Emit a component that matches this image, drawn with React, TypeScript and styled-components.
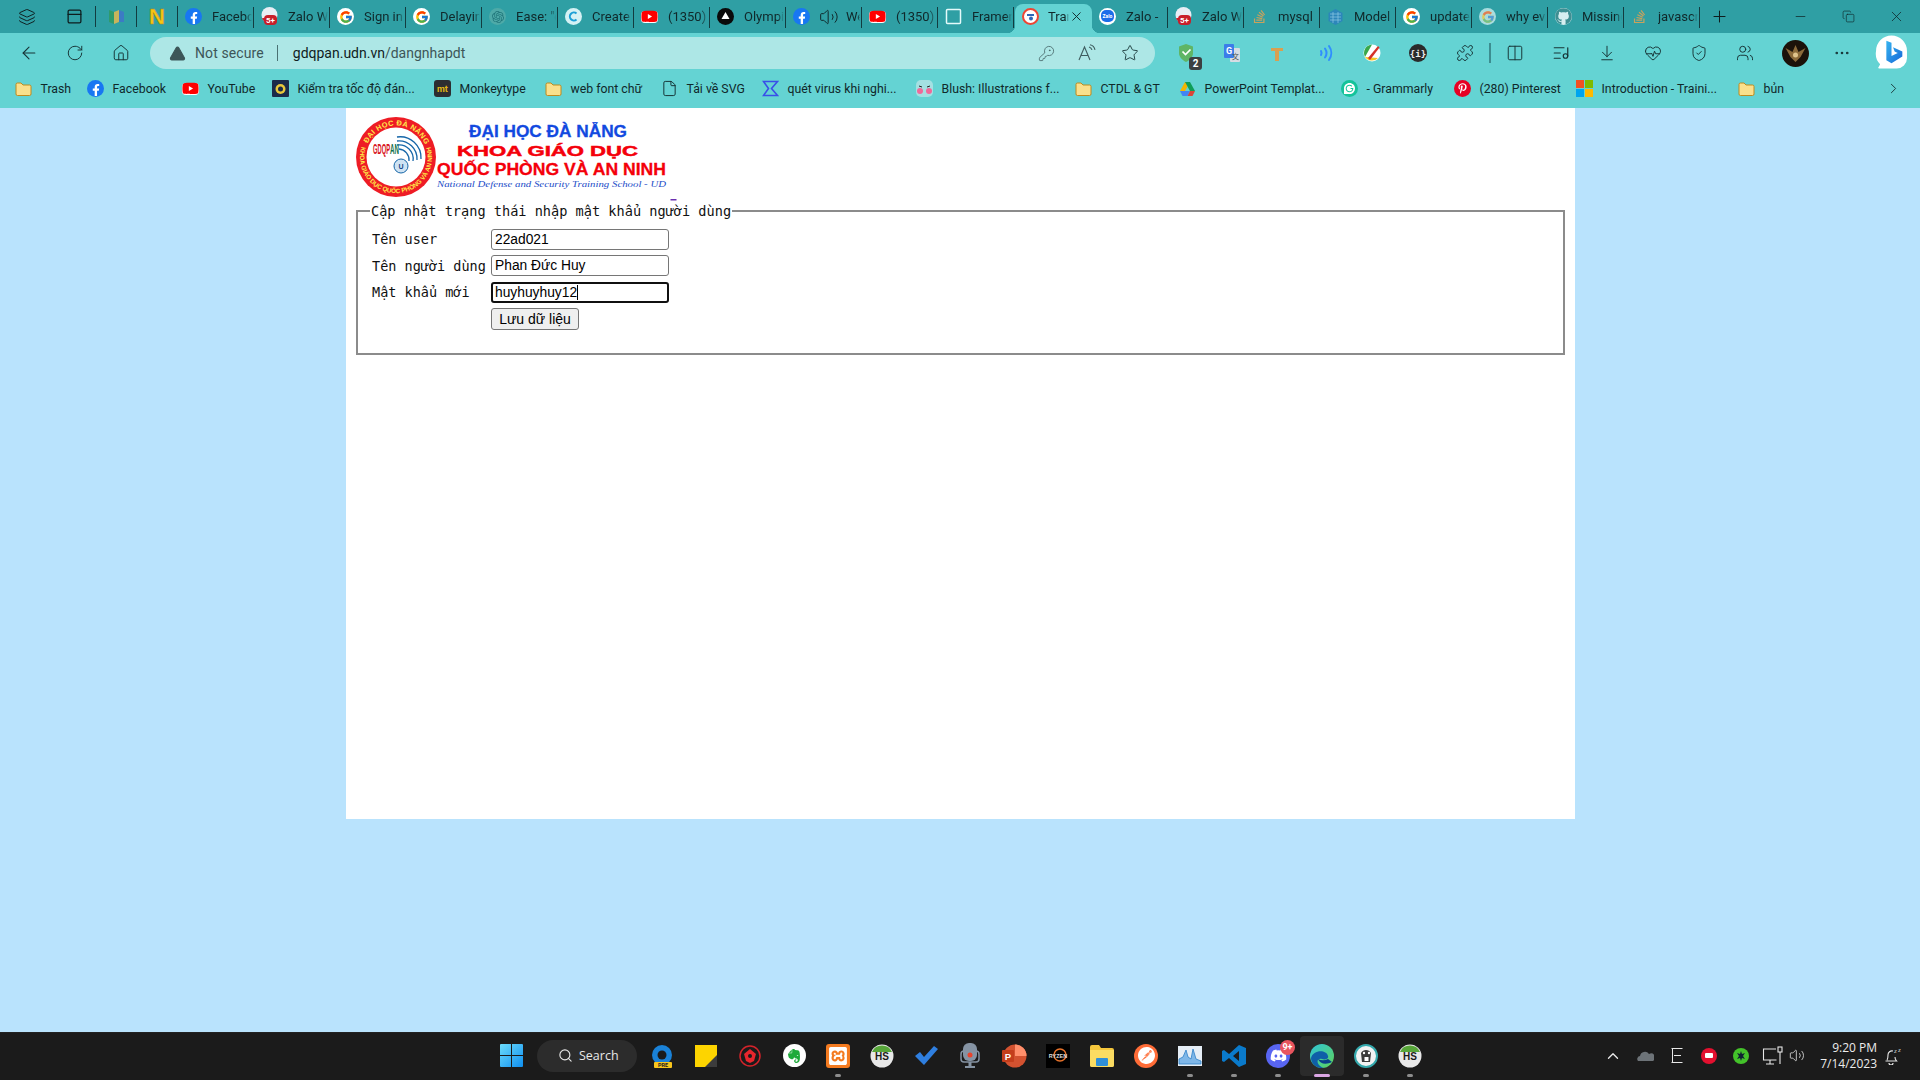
import React from "react";
import styled, { createGlobalStyle } from "styled-components";
import {
  ArrowLeft, RotateCw, House, TriangleAlert, KeyRound, Star, Puzzle, Columns2, ListMusic, ArrowDownToLine,
  HeartPulse, ShieldCheck, Ellipsis, Plus, Minus, X, Copy, ChevronRight, ChevronUp, Search, File, Volume2,
  Users, Layers, PanelTop,
} from "lucide-react";
import { FaFacebookF, FaGithub, FaStackOverflow, FaYoutube, FaPinterestP, FaDiscord, FaEvernote } from "react-icons/fa";
import { FcGoogle } from "react-icons/fc";
import { SiXampp, SiPostman, SiGrammarly, SiOpenai } from "react-icons/si";

const UI = `Roboto, "Noto Sans", sans-serif`;

const Global = createGlobalStyle`
  html, body { margin: 0; padding: 0; background: #b9e3fd; }
  * { box-sizing: border-box; }
`;

const Screen = styled.div`
  width: 1920px; height: 1080px; display: flex; flex-direction: column; overflow: hidden;
  font-family: ${UI}; background: #b9e3fd;
`;

/* ---------- tab strip ---------- */
const TabStrip = styled.div`
  height: 33px; flex: none; display: flex; align-items: center; background: #2f9fa4; color: #10282a;
`;
const StripIcon = styled.div<{ $w: number }>`
  width: ${p => p.$w}px; height: 33px; flex: none; display: flex; align-items: center; justify-content: center; color: #0e1d1e;
`;
const Sep = styled.div`
  width: 1px; height: 21px; flex: none; background: #123c40;
`;
const Tab = styled.div`
  width: 76px; height: 33px; flex: none; display: flex; align-items: center; padding: 0 2px 0 7px; position: relative;
  &::after { content: ""; position: absolute; right: 0; top: 7px; height: 21px; width: 1px; background: #123c40; }
`;
const ActiveTab = styled.div`
  width: 77px; height: 29px; margin: 4px 0 0 1px; flex: none; display: flex; align-items: center; padding: 0 8px 4px 7px; position: relative;
  background: #64d3d3; border-radius: 8px 8px 0 0; color: #10282a;
  &::before, &::after { content: ""; position: absolute; bottom: 0; width: 8px; height: 8px; }
  &::before { left: -8px; background: radial-gradient(circle at 0 0, transparent 8px, #64d3d3 8.500px); }
  &::after { right: -8px; background: radial-gradient(circle at 100% 0, transparent 8px, #64d3d3 8.500px); }
`;
const TabTitle = styled.span<{ $gap?: number }>`
  margin-left: ${p => p.$gap ?? 10}px; font-size: 13px; white-space: nowrap; overflow: hidden; flex: 1; min-width: 0;
  -webkit-mask-image: linear-gradient(90deg, #000 84%, transparent);
  mask-image: linear-gradient(90deg, #000 84%, transparent);
`;
const Fav = styled.span<{ $bg?: string; $c?: string; $s?: number }>`
  width: ${p => p.$s || 17}px; height: ${p => p.$s || 17}px; border-radius: 50%; flex: none; display: inline-flex; align-items: center; justify-content: center;
  background: ${p => p.$bg || "transparent"}; color: ${p => p.$c || "inherit"}; position: relative;
`;
const YtBox = styled.span`
  width: 17px; height: 12px; flex: none; display: inline-flex; align-items: center; justify-content: center; border-radius: 4px; background: #fff; color: #f00;
`;
const SpeakerSlot = styled.span`
  width: 20px; margin-left: 9px; flex: none; display: inline-flex; color: #10282a;
`;
const WindowButtons = styled.div`
  margin-left: auto; display: flex;
`;
const WinBtn = styled.div`
  width: 48px; height: 33px; display: flex; align-items: center; justify-content: center; color: #10282a;
`;

/* ---------- toolbar ---------- */
const Toolbar = styled.div`
  height: 40px; flex: none; display: flex; align-items: center; background: #64d3d3; padding-left: 6px; color: #173436;
`;
const ToolBtn = styled.div<{ $w?: number }>`
  width: ${p => p.$w || 46}px; height: 34px; flex: none; display: flex; align-items: center; justify-content: center; position: relative;
`;
const Address = styled.div`
  width: 1005px; height: 32px; margin: 0 8px 0 6px; flex: none; display: flex; align-items: center; border-radius: 16px;
  background: #ade7e6; padding-left: 19px; font-size: 14px;
`;
const NotSecure = styled.span`
  margin-left: 9px; color: #3d5658; font-size: 14px; letter-spacing: .1px;
`;
const AddrSep = styled.span`
  width: 1px; height: 16px; background: #4a7173; margin: 0 15px 0 13px;
`;
const Host = styled.span`
  color: #101d1e; font-size: 14px;
`;
const Path = styled.span`
  color: #3d5658;
`;
const AddrTools = styled.div`
  margin-left: auto; display: flex; align-items: center; padding-right: 4px; color: #3f5d5f;
`;
const AddrTool = styled.div`
  width: 42px; display: flex; justify-content: center;
`;
const ToolDivider = styled.div`
  width: 2px; height: 20px; margin: 0 1px 0 6px; background: #3c8d90; flex: none;
`;
const CountBadge = styled.span`
  position: absolute; right: 7px; bottom: 0; width: 13px; height: 13px; border-radius: 3px; background: #3b3f41; color: #fff;
  font-size: 10px; font-weight: 700; display: flex; align-items: center; justify-content: center;
`;

/* ---------- bookmarks ---------- */
const Bookmarks = styled.div`
  height: 35px; flex: none; display: flex; align-items: center; background: #64d3d3; padding: 0 0 4px 15px; position: relative; color: #10282a;
`;
const Bookmark = styled.div<{ $w: number }>`
  width: ${p => p.$w}px; flex: none; display: flex; align-items: center; gap: 8.500px; font-size: 12.300px; white-space: nowrap;
`;
const BmIcon = styled.span`
  width: 17px; height: 17px; flex: none; display: inline-flex; align-items: center; justify-content: center;
`;
const MoreBtn = styled.div`
  position: absolute; right: 18px; top: 7px; color: #173436;
`;

/* ---------- page ---------- */
const PageArea = styled.div`
  flex: 1; min-height: 0; display: flex; justify-content: center; align-items: flex-start; background: #b9e3fd;
`;
const Sheet = styled.main`
  width: 1229px; height: 711px; margin-left: 1px; background: #fff; padding: 7px 9px 0 10px;
`;
const LogoBox = styled.div`
  height: 88px; margin-left: -1px; line-height: 0;
`;
const Fieldset = styled.fieldset`
  width: 1209px; height: 152px; margin: 0; padding: 0 14px; border: 2px solid #8b8b8b; font-family: "DejaVu Sans Mono", monospace; font-size: 13.500px; color: #111;
`;
const Legend = styled.legend`
  padding: 0 1px; margin-left: -2px; line-height: 16px; height: 16px; font-size: 13.600px;
`;
const FormGrid = styled.div`
  display: grid; grid-template-columns: 119px 178px; grid-auto-rows: 21px; row-gap: 5.500px; align-items: center; margin-top: 9.500px;
`;
const Label = styled.label`
  white-space: nowrap; margin-right: -4px;
`;
const Field = styled.div<{ $focus?: boolean }>`
  height: 21px; display: flex; align-items: center; padding-left: ${p => (p.$focus ? 2 : 3)}px; border-radius: 3px; background: #fff;
  border: ${p => (p.$focus ? "2px solid #101010" : "1px solid #767676")};
  font-family: "Liberation Sans", Arial, sans-serif; font-size: 13.800px; color: #000; white-space: nowrap;
`;
const Caret = styled.span`
  display: inline-block; width: 1px; height: 15px; background: #000;
`;
const SaveButton = styled.button`
  grid-column: 2; justify-self: start; width: 88px; height: 22px; padding: 0; border: 1px solid #767676; border-radius: 3px; background: #efefef;
  font-family: "Liberation Sans", Arial, sans-serif; font-size: 14px; color: #000;
`;

/* ---------- taskbar ---------- */
const Taskbar = styled.footer`
  height: 48px; flex: none; display: flex; align-items: center; background: #1b1b1b; padding: 0 11px 2px 487px; color: #fff; border-top: 1px solid #222;
`;
const Start = styled.div`
  width: 48px; display: flex; justify-content: center; flex: none;
`;
const SearchPill = styled.div`
  width: 100px; height: 32px; margin-left: 2px; margin-right: 3px; flex: none; border-radius: 16px; background: #2c2c2c; display: flex; align-items: center; gap: 6px; padding-left: 21px; font-size: 12.500px; color: #e8e8e8;
  font-family: "Open Sans", sans-serif;
`;
const TaskBtn = styled.div<{ $active?: boolean }>`
  width: 44px; height: 40px; flex: none; display: flex; align-items: center; justify-content: center; position: relative; border-radius: 4px;
  background: ${p => (p.$active ? "#2b2b2b" : "transparent")};
`;
const RunDot = styled.span<{ $active?: boolean }>`
  position: absolute; bottom: -1px; left: 50%; transform: translateX(-50%); height: 3px; border-radius: 2px;
  width: ${p => (p.$active ? 16 : 6)}px; background: ${p => (p.$active ? "#dba6e4" : "#8d8d8d")};
`;
const Tray = styled.div`
  margin-left: auto; display: flex; align-items: center; color: #e8e8e8;
`;
const TrayIcon = styled.div<{ $w?: number }>`
  width: ${p => p.$w || 32}px; display: flex; justify-content: center; flex: none;
`;
const Clock = styled.div`
  width: 72px; text-align: right; font-family: "Open Sans", sans-serif; font-size: 12px; line-height: 16px; color: #ececec;
`;
const NineChip = styled.span`
  position: absolute; top: -4px; right: -5px; width: 15px; height: 15px; border-radius: 50%; background: #e8545e; color: #fff;
  font-size: 9px; font-weight: 700; display: flex; align-items: center; justify-content: center;
`;

/* ---------- favicons and drawings ---------- */
const Facebook = () => <Fav $bg="#1877f2" $c="#fff"><FaFacebookF size={12} style={{ marginTop: 3 }} /></Fav>;
const Google = () => <Fav $bg="#fff"><FcGoogle size={14} /></Fav>;
const GoogleDim = () => <Fav $bg="#a9dcde"><FcGoogle size={14} style={{ opacity: .6 }} /></Fav>;
const Youtube = () => <YtBox><FaYoutube size={19} /></YtBox>;
const ZaloWeb = () => (
  <svg width="17" height="19" viewBox="0 0 17 19"><circle cx="8.500" cy="8" r="8" fill="#e8eef5" /><path d="M1 11h15a8 8 0 0 1-15 0z" fill="#d11f2b" /><rect x="3" y="8" width="13" height="10" rx="4" fill="#c81e2a" /><text x="9.500" y="16" fontSize="8" fontWeight="700" fill="#fff" textAnchor="middle" fontFamily="Roboto">5+</text></svg>
);
const ZaloPlain = () => (
  <svg width="17" height="17" viewBox="0 0 17 17"><circle cx="8.500" cy="8.500" r="8.500" fill="#fff" /><rect x="2" y="2" width="13" height="12" rx="5" fill="#1b6dea" /><text x="8.500" y="10" fontSize="5" fontWeight="700" fill="#fff" textAnchor="middle" fontFamily="Roboto">Zalo</text></svg>
);
const Folder = () => (
  <svg width="17" height="16" viewBox="0 0 17 16"><path d="M1 3.500A1.500 1.500 0 0 1 2.500 2H6l2 2h6.500A1.500 1.500 0 0 1 16 5.500V13a1.500 1.500 0 0 1-1.500 1.500h-12A1.500 1.500 0 0 1 1 13z" fill="#fbe08c" stroke="#c08a1c" /></svg>
);
const TeacherLogo = () => (
  <svg width="17" height="17" viewBox="0 0 17 17"><circle cx="8.500" cy="8.500" r="7.500" fill="#fff" stroke="#e43" strokeWidth="2" /><path d="M5 6h7v2H5z" fill="#2d66b8" /><circle cx="9" cy="10.500" r="2" fill="#2d66b8" /></svg>
);
const Frame = () => <svg width="17" height="17" viewBox="0 0 17 17"><rect x="1.500" y="1.500" width="14" height="14" rx="1" fill="none" stroke="#e4fafa" strokeWidth="1.500" /></svg>;
const Olympia = () => <svg width="17" height="17" viewBox="0 0 17 17"><circle cx="8.500" cy="8.500" r="8.500" fill="#0a0a0a" /><path d="M8.500 4l4 7h-8z" fill="#fff" /></svg>;
const GChart = () => (
  <svg width="17" height="17" viewBox="0 0 17 17"><path d="M1 2l5 2v12l-5-2z" fill="#2f9a6c" /><path d="M6 4l5-2v12l-5 2z" fill="#c9b45c" /><path d="M11 2l5 2v10l-5 0z" fill="#3c7bc4" /></svg>
);
const NMark = styled.span`
  font-family: "Liberation Sans", sans-serif; font-weight: 700; font-size: 22px; color: #f7c613; line-height: 1; -webkit-text-stroke: .5px #b5860e;
`;
const ChatGpt = () => <Fav $bg="#4eaaa8" $c="#20757a"><SiOpenai size={12} /></Fav>;
const CreateIc = () => <svg width="17" height="17" viewBox="0 0 17 17"><circle cx="8.500" cy="8.500" r="8.500" fill="#d5f1f4" /><path d="M11.500 5.500a4 4 0 1 0 0 6" fill="none" stroke="#1c9fd6" strokeWidth="2" /></svg>;
const ModelIc = () => <svg width="17" height="18" viewBox="0 0 17 18"><path d="M8.500 1l7 4v8l-7 4-7-4V5z" fill="#2c86ba" /><path d="M3 6h11M3 9h11M3 12h11M6 4v11M11 4v11" stroke="#8cc8e4" strokeWidth=".7" /></svg>;
const Adguard = () => <svg width="18" height="20" viewBox="0 0 18 20"><path d="M9 1l7 2.500V10c0 4-3 7-7 9-4-2-7-5-7-9V3.500z" fill="#5fb565" /><path d="M5.500 8.500l3 3 5-5" fill="none" stroke="#fff" strokeWidth="1.700" /></svg>;
const Translate = () => <svg width="18" height="20" viewBox="0 0 18 20"><rect x="7" y="5" width="10" height="14" rx="1" fill="#d7dde4" /><rect x="1" y="1" width="10" height="14" rx="1" fill="#3b7de9" /><text x="6" y="11" fontSize="9" fontWeight="700" fill="#fff" textAnchor="middle" fontFamily="Roboto">G</text><text x="12.500" y="16" fontSize="7" fill="#555" textAnchor="middle" fontFamily="Noto Sans CJK JP">文</text></svg>;
const OrangeExt = () => <svg width="14" height="17" viewBox="0 0 14 17"><path d="M1 3h12v3H9v10H5V6H1z" fill="#d8a050" /></svg>;
const Waves = () => <svg width="16" height="18" viewBox="0 0 16 18" fill="none" stroke="#2f8dff" strokeWidth="2" strokeLinecap="round"><path d="M3 7a4 4 0 0 1 0 4M7 4.500a8 8 0 0 1 0 9M11 2a12 12 0 0 1 0 14" /></svg>;
const ColorExt = () => <svg width="18" height="18" viewBox="0 0 18 18"><circle cx="9" cy="9" r="8.500" fill="#fff" /><path d="M9 .5A8.500 8.500 0 0 0 2 13z" fill="#38a84b" /><path d="M2 13a8.500 8.500 0 0 0 13 1z" fill="#f3c623" /><path d="M5 14L15 2l1.500 1.500L7 16z" fill="#d63228" /></svg>;
const DarkExt = () => <svg width="18" height="18" viewBox="0 0 18 18"><circle cx="9" cy="9" r="9" fill="#2b2b2b" /><text x="9" y="13" fontSize="9" fontWeight="700" fill="#eee" textAnchor="middle" fontFamily="DejaVu Sans Mono">{"{i}"}</text></svg>;
const Avatar = () => <svg width="27" height="27" viewBox="0 0 27 27"><circle cx="13.500" cy="13.500" r="13.500" fill="#1b120a" /><path d="M13.500 5l3 7 7-4-5 9-5 5-5-5-5-9 7 4z" fill="#8b6a3a" /><circle cx="13.500" cy="15" r="2.500" fill="#e0c48c" /></svg>;
const ReadAloud = () => (
  <svg width="20" height="18" viewBox="0 0 20 18" fill="none" stroke="#3f5d5f" strokeWidth="1.100"><path d="M1 16L6.500 3 12 16M3 11.500h7" /><path d="M11 3a4 4 0 0 1 3 3M12 .8a6.500 6.500 0 0 1 5 5" /></svg>
);
const Bing = () => (
  <svg width="33" height="38" viewBox="0 0 32 36">
    <defs><linearGradient id="bg" x1="0" y1="0" x2="1" y2="1"><stop offset="0" stopColor="#36b4f0" /><stop offset="1" stopColor="#1668d8" /></linearGradient></defs>
    <path d="M16 1a15 15 0 0 1 15 15v7a10 10 0 0 1-10 10H4c-1 0-1-1-.5-1.500L5 29A15 15 0 0 1 1 16 15 15 0 0 1 16 1z" fill="#fff" />
    <path d="M11 6l5 2v13l6-3-3-1.500-1.500-4 9 4v5L16 28l-5-3z" fill="url(#bg)" />
  </svg>
);
const NetMonitor = () => (
  <svg width="22" height="20" viewBox="0 0 22 20" fill="none" stroke="#e8e8e8" strokeWidth="1.100"><path d="M14 3H1.500v11h13M8 14v4M4 18h8" /><rect x="16" y="1" width="4" height="5" /><path d="M18 6v12" /></svg>
);
const BellZz = () => (
  <svg width="18" height="18" viewBox="0 0 18 18" fill="none" stroke="#e8e8e8" strokeWidth="1.100"><path d="M3 13c1-1 1-3 1-5a4 4 0 0 1 5-4M1.500 14h11c-1-1-1.500-2-1.500-4M5 16a2 2 0 0 0 4 0" /><text x="10" y="6" fontSize="6" fill="#e8e8e8" stroke="none" fontFamily="Open Sans">z</text><text x="14" y="4.500" fontSize="6" fill="#e8e8e8" stroke="none" fontFamily="Open Sans">z</text></svg>
);
const Logo = () => (
  <svg width="322" height="86" viewBox="0 0 322 86">
    <defs>
      <path id="ringTop" d="M11.400 31.200A31.500 31.500 0 0 1 70.600 31.200" />
      <path id="ringBot" d="M8.400 26.800A36 36 0 1 0 73.600 26.800" />
    </defs>
    <circle cx="41" cy="42" r="40" fill="#ee1c25" />
    <circle cx="41" cy="42" r="29.500" fill="#fff" />
    <text fontSize="7.400" fontWeight="700" fill="#ffe94a" fontFamily="Liberation Sans"><textPath href="#ringTop" startOffset="3" textLength="72">ĐẠI HỌC ĐÀ NẴNG</textPath></text>
    <text fontSize="6.400" fontWeight="700" fill="#ffe94a" fontFamily="Liberation Sans"><textPath href="#ringBot" startOffset="5" textLength="134">KHOA GIÁO DỤC QUỐC PHÒNG VÀ AN NINH</textPath></text>
    <g fill="none" stroke="#1666a8" strokeWidth="1.300">
      <path d="M42 22a21 21 0 0 1 24 22" /><path d="M42 26a18 18 0 0 1 20 19" /><path d="M42 30a14 14 0 0 1 16 16" /><path d="M44 34a11 11 0 0 1 10 12" />
    </g>
    <text x="18" y="39" fontSize="15" fontWeight="700" fill="#d8121a" fontFamily="Liberation Sans" textLength="17" lengthAdjust="spacingAndGlyphs">GDQP</text>
    <text x="35" y="39" fontSize="15" fontWeight="700" fill="#12704a" fontFamily="Liberation Sans" textLength="9" lengthAdjust="spacingAndGlyphs">AN</text>
    <circle cx="46" cy="51" r="7" fill="#cfe3f3" stroke="#1666a8" /><text x="46" y="54" fontSize="7" fontWeight="700" fill="#16468a" textAnchor="middle" fontFamily="Liberation Sans">U</text>
    <text x="193" y="21.500" fontSize="17" fontWeight="700" fill="#1249e0" stroke="#1249e0" strokeWidth=".3" textAnchor="middle" fontFamily="Liberation Sans" textLength="158" lengthAdjust="spacingAndGlyphs">ĐẠI HỌC ĐÀ NẴNG</text>
    <text x="192.500" y="41" fontSize="15" fontWeight="700" fill="#f4000a" stroke="#f4000a" strokeWidth=".5" textAnchor="middle" fontFamily="Liberation Sans" textLength="181" lengthAdjust="spacingAndGlyphs">KHOA  GIÁO  DỤC</text>
    <text x="196.500" y="59.500" fontSize="17" fontWeight="700" fill="#f4000a" stroke="#f4000a" strokeWidth=".3" textAnchor="middle" fontFamily="Liberation Sans" textLength="229" lengthAdjust="spacingAndGlyphs">QUỐC PHÒNG VÀ AN NINH</text>
    <text x="196.500" y="72" fontSize="9" fontStyle="italic" fill="#1b4cc8" textAnchor="middle" fontFamily="Liberation Serif" textLength="229" lengthAdjust="spacingAndGlyphs">National Defense and Security Training School - UD</text>
    <rect x="315.500" y="84" width="6" height="1.500" fill="#6a2fb0" />
  </svg>
);

const tabs: [React.ReactNode, string][] = [
  [<Facebook />, "Facebook"],
  [<ZaloWeb />, "Zalo Web"],
  [<Google />, "Sign in"],
  [<Google />, "Delaying"],
  [<ChatGpt />, "Ease: \"could"],
  [<CreateIc />, "Create"],
  [<Youtube />, "(1350)"],
  [<Olympia />, "Olympia"],
];
const tabs2: [React.ReactNode, string][] = [
  [<Youtube />, "(1350)"],
  [<Frame />, "Framer"],
];
const tabs3: [React.ReactNode, string][] = [
  [<ZaloPlain />, "Zalo -"],
  [<ZaloWeb />, "Zalo Web"],
  [<Fav $c="#c9a25c"><FaStackOverflow size={15} /></Fav>, "mysql"],
  [<ModelIc />, "Model"],
  [<Google />, "update"],
  [<GoogleDim />, "why every"],
  [<Fav $bg="#d6eef0" $c="#3e8f93"><FaGithub size={17} /></Fav>, "Missing"],
  [<Fav $c="#c9a25c"><FaStackOverflow size={15} /></Fav>, "javascript"],
];

const bookmarks: [React.ReactNode, string, number][] = [
  [<Folder />, "Trash", 72],
  [<Facebook />, "Facebook", 95],
  [<Youtube />, "YouTube", 90],
  [<svg width="17" height="17" viewBox="0 0 17 17"><rect width="17" height="17" rx="1" fill="#1b2b4a" /><circle cx="8.500" cy="9" r="5" fill="#e8c83c" /><circle cx="8.500" cy="9" r="2.500" fill="#1b2b4a" /></svg>, "Kiểm tra tốc độ đán...", 162],
  [<svg width="17" height="17" viewBox="0 0 17 17"><rect width="17" height="17" rx="3" fill="#2c2e31" /><text x="8.500" y="12" fontSize="9" fontWeight="700" fill="#e2b714" textAnchor="middle" fontFamily="Roboto">mt</text></svg>, "Monkeytype", 111],
  [<Folder />, "web font chữ", 116],
  [<File size={17} strokeWidth={1.300} />, "Tải về SVG", 101],
  [<svg width="17" height="17" viewBox="0 0 17 17"><path d="M1.500 1.500h14l-6 7 6 7h-14l5-7z" fill="none" stroke="#3a4fe8" strokeWidth="1.600" /></svg>, "quét virus khi nghi...", 154],
  [<svg width="17" height="17" viewBox="0 0 17 17"><rect width="17" height="17" rx="5" fill="#a4e0e2" /><circle cx="4" cy="11" r="3" fill="#f06a9a" /><circle cx="13" cy="11" r="3" fill="#f06a9a" /><path d="M3 6l3 1M14 6l-3 1" stroke="#222" /></svg>, "Blush: Illustrations f...", 159],
  [<Folder />, "CTDL & GT", 104],
  [<svg width="17" height="16" viewBox="0 0 17 16"><path d="M6 1h5l-5 9H1z" fill="#f4b400" /><path d="M11 1l5 9h-5L6 1z" fill="#0f9d58" /><path d="M1 10h10l-2.500 5H3.500z" fill="#4285f4" /><path d="M11 10h5l-2.500 5h-5z" fill="#db4437" /></svg>, "PowerPoint Templat...", 162],
  [<Fav $bg="#15c39a" $c="#fff"><SiGrammarly size={11} /></Fav>, "- Grammarly", 113],
  [<Fav $bg="#e60023" $c="#fff"><FaPinterestP size={11} /></Fav>, "(280) Pinterest", 122],
  [<svg width="17" height="17" viewBox="0 0 17 17"><rect width="8" height="8" fill="#f25022" /><rect x="9" width="8" height="8" fill="#7fba00" /><rect y="9" width="8" height="8" fill="#00a4ef" /><rect x="9" y="9" width="8" height="8" fill="#ffb900" /></svg>, "Introduction - Traini...", 162],
  [<Folder />, "bủn", 60],
];

const HsIcon = () => (
  <svg width="24" height="24" viewBox="0 0 24 24"><circle cx="12" cy="12" r="11.500" fill="#e8e8e8" /><path d="M2 8a11 11 0 0 1 20 0z" fill="#57a639" /><text x="12" y="16" fontSize="10" fontWeight="700" fill="#1a1a1a" textAnchor="middle" fontFamily="Liberation Sans">HS</text></svg>
);

const taskIcons: [React.ReactNode, boolean?][] = [
  [<svg width="24" height="24" viewBox="0 0 24 24"><circle cx="12" cy="11" r="10" fill="#1a82d8" /><circle cx="12" cy="11" r="4.500" fill="#1b1b1b" /><rect x="4" y="18" width="18" height="6" rx="1" fill="#f8c51c" /><text x="13" y="23" fontSize="5.500" fontWeight="700" fill="#222" textAnchor="middle" fontFamily="Roboto">PRE</text></svg>],
  [<svg width="22" height="22" viewBox="0 0 22 22"><path d="M0 0h22v14l-8 8H0z" fill="#fdd400" /><path d="M22 10v12H10z" fill="#3c3c3c" /></svg>],
  [<svg width="22" height="22" viewBox="0 0 22 22"><circle cx="11" cy="11" r="10" fill="none" stroke="#d4232a" strokeWidth="1.500" /><path d="M11 4l6 5-2 7-4 2-4-2-2-7z" fill="#e8262d" /><circle cx="11" cy="11" r="2" fill="#1b1b1b" /></svg>],
  [<Fav $bg="#fff" $c="#1faa3a" $s={23}><FaEvernote size={16} /></Fav>],
  [<Fav $bg="#f47b20" $c="#fff" $s={24} style={{ borderRadius: 3 }}><SiXampp size={18} /></Fav>, true],
  [<HsIcon />],
  [<svg width="24" height="22" viewBox="0 0 24 22"><path d="M1 11l5-4 4 5L20 1l4 3L10 20z" fill="#2f7fe0" /></svg>],
  [<svg width="20" height="26" viewBox="0 0 20 26"><rect x="3" y="0" width="14" height="18" rx="6" fill="#8593a3" /><circle cx="10" cy="12" r="2.500" fill="#e8442c" /><rect x="1" y="8" width="18" height="11" rx="3" fill="none" stroke="#8593a3" strokeWidth="1.500" /><rect x="8.500" y="19" width="3" height="4" fill="#8593a3" /><rect x="5" y="23" width="10" height="2" fill="#8593a3" /></svg>],
  [<svg width="25" height="24" viewBox="0 0 25 24"><circle cx="13" cy="12" r="11.500" fill="#d35230" /><path d="M13 .5a11.500 11.500 0 0 1 11.500 11.500H13z" fill="#ff8f6b" /><rect x="0" y="6" width="12" height="12" rx="1" fill="#c43e1c" /><text x="6" y="15.500" fontSize="9.500" fontWeight="700" fill="#fff" textAnchor="middle" fontFamily="Liberation Sans">P</text></svg>],
  [<svg width="24" height="24" viewBox="0 0 24 24"><rect width="24" height="24" fill="#000" /><circle cx="14" cy="11" r="6" fill="none" stroke="#e8722a" strokeWidth="1.500" /><text x="12" y="14" fontSize="5.500" fontWeight="700" fill="#ddd" textAnchor="middle" fontFamily="Liberation Sans">RYZEN</text></svg>],
  [<svg width="24" height="22" viewBox="0 0 24 22"><path d="M0 2a2 2 0 0 1 2-2h7l2 3h11a2 2 0 0 1 2 2v15a2 2 0 0 1-2 2H2a2 2 0 0 1-2-2z" fill="#f5c73c" /><path d="M0 5h24v15a2 2 0 0 1-2 2H2a2 2 0 0 1-2-2z" fill="#fbdc62" /><rect x="6" y="13" width="12" height="8" rx="1" fill="#2f8fd8" /></svg>],
  [<Fav $bg="#ff6c37" $c="#fff" $s={24}><SiPostman size={17} /></Fav>],
  [<svg width="24" height="20" viewBox="0 0 24 20"><rect width="24" height="20" fill="#e6eef6" /><path d="M1 18V13l4-2 3-7 2 7 3 2 2-10 3 10 5 2v3z" fill="#7fb7e8" stroke="#2f80c8" strokeWidth=".8" /></svg>, true],
  [<svg width="24" height="24" viewBox="0 0 24 24"><path d="M17 1l7 3v16l-7 3-10-9-5 4-2-1V7l2-1 5 4zM17 7l-6 5 6 5z" fill="#0a7acb" fillRule="evenodd" /></svg>, true],
  [<Fav $s={24} $bg="#5865f2" $c="#fff"><FaDiscord size={17} /><NineChip>9+</NineChip></Fav>, true],
];

const Edge = () => (
  <svg width="24" height="24" viewBox="0 0 24 24">
    <defs><linearGradient id="eg" x1="0" y1="0" x2="1" y2="1"><stop offset="0" stopColor="#2fc4d8" /><stop offset="1" stopColor="#5fd35a" /></linearGradient></defs>
    <circle cx="12" cy="12" r="12" fill="url(#eg)" /><path d="M1 14C3 6 16 5 18 12c1 3-3 4-6 3-4-1-6 2-3 6 1 1 4 3 5 3C7 25 1 20 1 14z" fill="#0f5fa8" /><path d="M18 15a7 4 0 0 1-10 0c2 5 8 6 14 3z" fill="#0a3f8a" />
  </svg>
);
const Beaver = () => <svg width="24" height="24" viewBox="0 0 24 24"><circle cx="12" cy="12" r="11" fill="#f2f2f2" stroke="#34a8ac" strokeWidth="2" /><path d="M7 9c2-4 8-4 10 0l-1 9H8z" fill="#3a3a3a" /><circle cx="10" cy="9" r="1.200" fill="#fff" /><circle cx="15" cy="9" r="1.200" fill="#fff" /><rect x="10.500" y="13" width="4" height="4" fill="#fff" /></svg>;

export default function App() {
  return (
    <Screen>
      <Global />
      <TabStrip>
        <StripIcon $w={54}><Layers size={18} strokeWidth={1.300} /></StripIcon>
        <StripIcon $w={41}><PanelTop size={17} strokeWidth={1.800} /></StripIcon>
        <Sep />
        <StripIcon $w={40}><GChart /></StripIcon>
        <Sep />
        <StripIcon $w={40}><NMark>N</NMark></StripIcon>
        <Sep />
        {tabs.map(([ic, t], i) => (
          <Tab key={i}>{ic}<TabTitle>{t}</TabTitle></Tab>
        ))}
        <Tab><Facebook /><SpeakerSlot><Volume2 size={20} strokeWidth={1.200} /></SpeakerSlot><TabTitle $gap={7}>Web</TabTitle></Tab>
        {tabs2.map(([ic, t], i) => (
          <Tab key={i}>{ic}<TabTitle>{t}</TabTitle></Tab>
        ))}
        <ActiveTab>
          <TeacherLogo /><TabTitle $gap={9}>Trang</TabTitle><X size={15} strokeWidth={1.500} />
        </ActiveTab>
        {tabs3.map(([ic, t], i) => (
          <Tab key={i}>{ic}<TabTitle>{t}</TabTitle></Tab>
        ))}
        <StripIcon $w={38}><Plus size={19} strokeWidth={1.300} /></StripIcon>
        <WindowButtons>
          <WinBtn><Minus size={15} strokeWidth={1.200} /></WinBtn>
          <WinBtn><Copy size={13} strokeWidth={1.200} /></WinBtn>
          <WinBtn><X size={17} strokeWidth={1.100} /></WinBtn>
        </WindowButtons>
      </TabStrip>

      <Toolbar>
        <ToolBtn><ArrowLeft size={20} strokeWidth={1.300} /></ToolBtn>
        <ToolBtn><RotateCw size={18} strokeWidth={1.300} /></ToolBtn>
        <ToolBtn><House size={18} strokeWidth={1.300} /></ToolBtn>
        <Address>
          <TriangleAlert size={17} fill="#3d5658" color="#3d5658" strokeWidth={1.500} />
          <NotSecure>Not secure</NotSecure>
          <AddrSep />
          <Host>gdqpan.udn.vn<Path>/dangnhapdt</Path></Host>
          <AddrTools>
            <AddrTool><KeyRound size={17} strokeWidth={1.100} /></AddrTool>
            <AddrTool><ReadAloud /></AddrTool>
            <AddrTool><Star size={18} strokeWidth={1.200} color="#173436" /></AddrTool>
          </AddrTools>
        </Address>
        <ToolBtn><Adguard /><CountBadge>2</CountBadge></ToolBtn>
        <ToolBtn><Translate /></ToolBtn>
        <ToolBtn $w={43}><OrangeExt /></ToolBtn>
        <ToolBtn $w={56}><Waves /></ToolBtn>
        <ToolBtn $w={36}><ColorExt /></ToolBtn>
        <ToolBtn $w={56}><DarkExt /></ToolBtn>
        <ToolBtn $w={37}><Puzzle size={18} strokeWidth={1.300} /></ToolBtn>
        <ToolDivider />
        <ToolBtn><Columns2 size={18} strokeWidth={1.300} /></ToolBtn>
        <ToolBtn><ListMusic size={18} strokeWidth={1.600} /></ToolBtn>
        <ToolBtn><ArrowDownToLine size={18} strokeWidth={1.300} /></ToolBtn>
        <ToolBtn><HeartPulse size={18} strokeWidth={1.300} /></ToolBtn>
        <ToolBtn><ShieldCheck size={18} strokeWidth={1.300} /></ToolBtn>
        <ToolBtn><Users size={18} strokeWidth={1.300} /></ToolBtn>
        <ToolBtn $w={54}><Avatar /></ToolBtn>
        <ToolBtn $w={40}><Ellipsis size={18} strokeWidth={1.500} /></ToolBtn>
        <ToolBtn $w={58}><Bing /></ToolBtn>
      </Toolbar>

      <Bookmarks>
        {bookmarks.map(([ic, t, w], i) => (
          <Bookmark key={i} $w={w}><BmIcon>{ic}</BmIcon>{t}</Bookmark>
        ))}
        <MoreBtn><ChevronRight size={17} strokeWidth={1.300} /></MoreBtn>
      </Bookmarks>

      <PageArea>
        <Sheet>
          <LogoBox><Logo /></LogoBox>
          <Fieldset>
            <Legend>Cập nhật trạng thái nhập mật khẩu người dùng</Legend>
            <FormGrid>
              <Label>Tên user</Label>
              <Field>22ad021</Field>
              <Label>Tên người dùng</Label>
              <Field>Phan Đức Huy</Field>
              <Label>Mật khẩu mới</Label>
              <Field $focus>huyhuyhuy12<Caret /></Field>
              <SaveButton type="button">Lưu dữ liệu</SaveButton>
            </FormGrid>
          </Fieldset>
        </Sheet>
      </PageArea>

      <Taskbar>
        <Start>
          <svg width="23" height="23" viewBox="0 0 23 23">
            <defs><linearGradient id="wg" x1="0" y1="0" x2="1" y2="1"><stop offset="0" stopColor="#6cdcfb" /><stop offset="1" stopColor="#0f8ff0" /></linearGradient></defs>
            <path d="M0 1a1 1 0 0 1 1-1h10v11H0zM12 0h10a1 1 0 0 1 1 1v10H12zM0 12h11v11H1a1 1 0 0 1-1-1zM12 12h11v10a1 1 0 0 1-1 1H12z" fill="url(#wg)" />
          </svg>
        </Start>
        <SearchPill><Search size={15} strokeWidth={1.800} />Search</SearchPill>
        {taskIcons.map(([ic, run], i) => (
          <TaskBtn key={i}>{ic}{run && <RunDot />}</TaskBtn>
        ))}
        <TaskBtn $active><Edge /><RunDot $active /></TaskBtn>
        <TaskBtn><Beaver /><RunDot /></TaskBtn>
        <TaskBtn><HsIcon /><RunDot /></TaskBtn>
        <Tray>
          <TrayIcon><ChevronUp size={18} strokeWidth={1.800} /></TrayIcon>
          <TrayIcon><svg width="17" height="10" viewBox="0 0 17 10"><path d="M1 10a3 3 0 0 1 2-5 5 5 0 0 1 9-2 4 4 0 0 1 4 7z" fill="#6d7378" /></svg></TrayIcon>
          <TrayIcon><svg width="12" height="15" viewBox="0 0 12 15" fill="none" stroke="#e8e8e8" strokeWidth="1"><path d="M.5.500h11M.5 14.500h11M1.500.500v14M3 7.500h7" /></svg></TrayIcon>
          <TrayIcon><svg width="16" height="16" viewBox="0 0 16 16"><circle cx="8" cy="8" r="8" fill="#e3102f" /><rect x="4" y="5" width="8" height="5" rx="1" fill="#fff" /></svg></TrayIcon>
          <TrayIcon><svg width="16" height="16" viewBox="0 0 16 16"><circle cx="8" cy="8" r="8" fill="#44c32a" /><path d="M8 3l1 3 3-1-2 3 2 3-3-1-1 3-1-3-3 1 2-3-2-3 3 1z" fill="#123" /></svg></TrayIcon>
          <TrayIcon><NetMonitor /></TrayIcon>
          <TrayIcon $w={16}><Volume2 size={17} strokeWidth={1.200} /></TrayIcon>
          <Clock>9:20 PM<br />7/14/2023</Clock>
          <TrayIcon><BellZz /></TrayIcon>
        </Tray>
      </Taskbar>
    </Screen>
  );
}
